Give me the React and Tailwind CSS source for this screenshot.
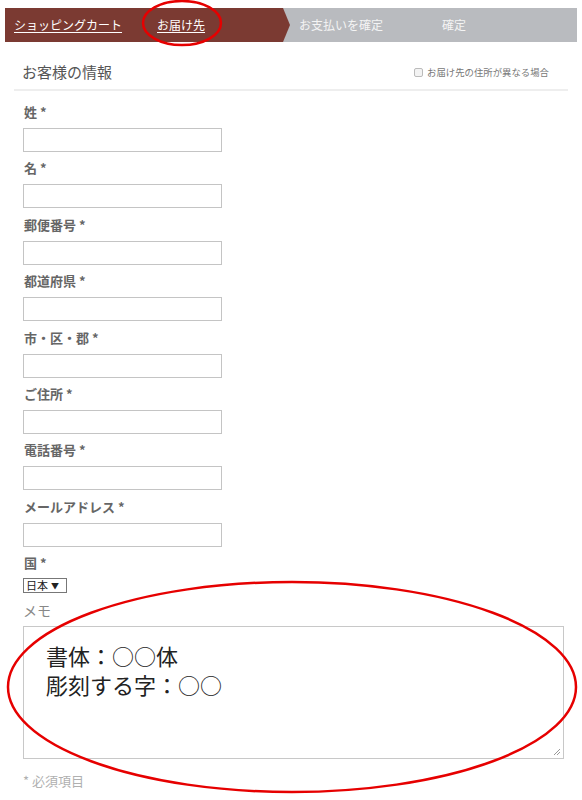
const fields = [
  "姓 *",
  "名 *",
  "郵便番号 *",
  "都道府県 *",
  "市・区・郡 *",
  "ご住所 *",
  "電話番号 *",
  "メールアドレス *",
];

function Steps() {
  return (
    <div className="mx-[5px] mt-[8px] flex h-[34px] text-[12px] leading-[34px] text-white">
      <div className="relative flex w-[278px] bg-[#7b3a32]">
        <span className="ml-[9px] underline underline-offset-2">ショッピングカート</span>
        <span className="ml-[35px] underline underline-offset-2">お届け先</span>
        <svg className="absolute left-full top-0" width="7" height="34" viewBox="0 0 7 34">
          <polygon points="0,0 7,17 0,34" fill="#7b3a32" />
        </svg>
      </div>
      <div className="flex flex-1 bg-[#b9bbbf] text-[#f4f4f4]">
        <span className="ml-[16px]">お支払いを確定</span>
        <span className="ml-[59px]">確定</span>
      </div>
    </div>
  );
}

export default function App() {
  return (
    <div
      className="relative h-[800px] w-[582px] overflow-hidden bg-white"
      style={{ fontFamily: '"Noto Sans CJK JP", "Noto Sans", sans-serif' }}
    >
      <Steps />

      <div className="mx-[14px] mt-[19px] flex items-center justify-between border-b-2 border-[#eeeeee] pb-[6px]">
        <h2 className="ml-[8px] text-[15px] leading-[22px] text-[#555]">お客様の情報</h2>
        <label className="mr-[19px] flex items-center gap-[4px] text-[9.4px] leading-[14px] text-[#777]">
          <span className="h-[9px] w-[9px] rounded-[2px] border border-[#bbb] bg-[#f3f3f3]" />
          お届け先の住所が異なる場合
        </label>
      </div>

      <div className="ml-[23px] mt-[11px]">
        {fields.map((f) => (
          <div key={f} className="mb-[6.4px]">
            <div className="ml-[1px] text-[13px] font-bold leading-[20px] text-[#666]">{f}</div>
            <div className="mt-[6px] h-[24px] w-[199px] border border-[#c4c4c4] bg-white" />
          </div>
        ))}

        <div className="ml-[1px] text-[13px] font-bold leading-[20px] text-[#666]">国 *</div>
        <div className="mt-[5px] flex h-[15px] w-[44px] items-center border border-[#777] pl-[2px] text-[11px] leading-[13px] text-[#222]">
          日本 <span className="ml-[3px] text-[8px]">▼</span>
        </div>

        <div className="mt-[7px] text-[14px] leading-[20px] text-[#888]">メモ</div>
        <div className="relative mt-[6px] h-[133px] w-[541px] border border-[#c8c8c8] pl-[22px] pt-[14px] text-[22px] leading-[29px] text-[#222]">
          <div>書体：○○体</div>
          <div>彫刻する字：○○</div>
          <svg className="absolute bottom-[2px] right-[2px]" width="8" height="8" viewBox="0 0 8 8">
            <path d="M7 1 L1 7 M7 4 L4 7" stroke="#999" strokeWidth="1" />
          </svg>
        </div>

        <div className="mt-[12px] text-[13px] leading-[20px] text-[#b0b0b0]">* 必須項目</div>
      </div>

      <svg className="pointer-events-none absolute left-0 top-0" width="582" height="800">
        <ellipse cx="182" cy="23" rx="39" ry="22" fill="none" stroke="#e60000" strokeWidth="2.5" />
        <ellipse cx="292" cy="687" rx="284" ry="105" fill="none" stroke="#e60000" strokeWidth="2.5" />
      </svg>
    </div>
  );
}
